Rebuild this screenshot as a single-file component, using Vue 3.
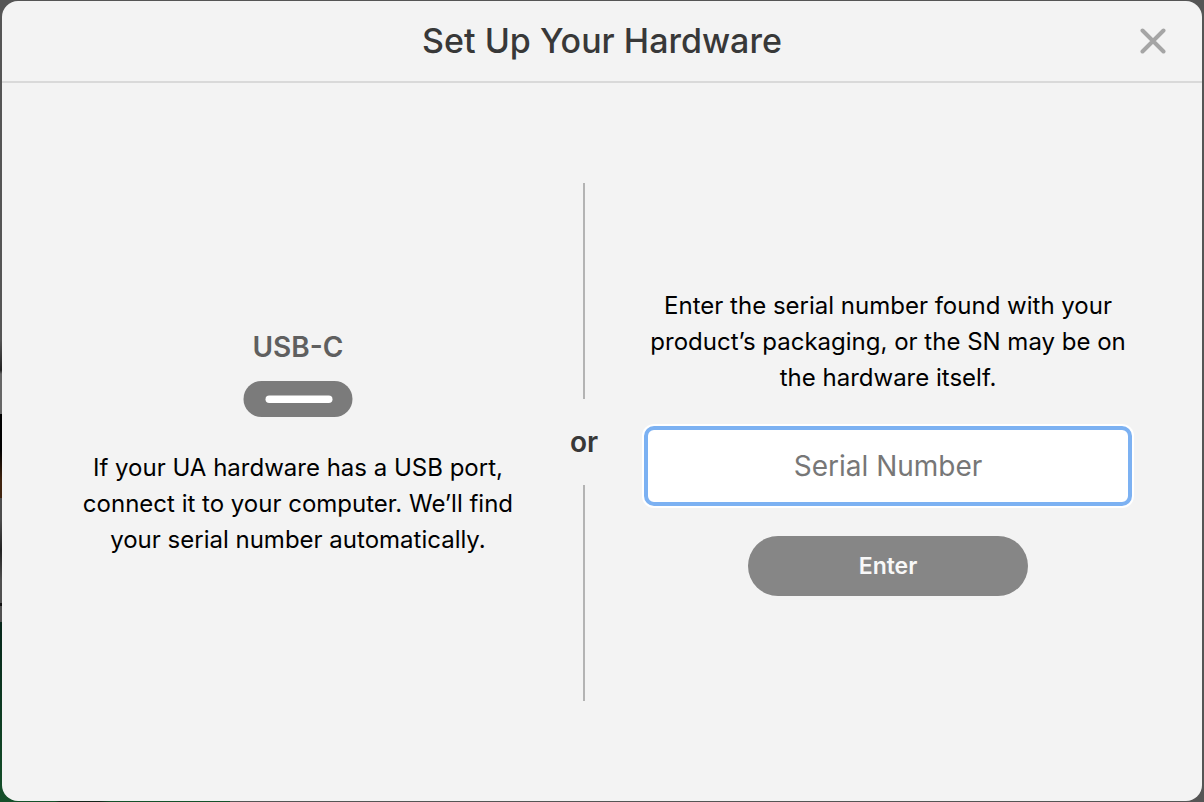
<script setup>
import { ref } from 'vue'

const serial = ref('')
</script>

<template>
  <div class="backdrop">
    <section class="dialog" role="dialog" aria-labelledby="dialog-title">
      <header class="header">
        <h1 id="dialog-title" class="title">Set Up Your Hardware</h1>
        <button class="close" type="button" aria-label="Close">
          <svg viewBox="0 0 26 26" width="26" height="26" aria-hidden="true">
            <path d="M2.5 2.5 23.5 23.5M23.5 2.5 2.5 23.5" fill="none" stroke="#a5a5a5" stroke-width="4" stroke-linecap="round" />
          </svg>
        </button>
      </header>

      <div class="content">
        <div class="usb">
          <h2 class="port-name">USB-C</h2>
          <svg class="port" viewBox="0 0 110 36" width="110" height="36" aria-hidden="true">
            <rect x="0.5" width="109" height="36" rx="18" fill="#7b7b7b" />
            <rect x="22.5" y="14.5" width="67" height="7.5" rx="3.75" fill="#fff" />
          </svg>
          <p class="text">If your UA hardware has a USB port, connect it to your computer. We’ll find your serial number automatically.</p>
        </div>

        <div class="divider">or</div>

        <form class="entry" @submit.prevent>
          <label class="text" for="serial">Enter the serial number found with your product’s packaging, or the SN may be on the hardware itself.</label>
          <input id="serial" v-model="serial" class="serial" type="text" placeholder="Serial Number" />
          <button class="enter" type="submit">Enter</button>
        </form>
      </div>
    </section>
  </div>
</template>

<style>
body {
  margin: 0;
}
</style>

<style scoped>
.backdrop {
  box-sizing: border-box;
  display: flex;
  min-height: 100vh;
  padding: 1px 2px;
  font-family: Inter, "Liberation Sans", sans-serif;
  background:
    linear-gradient(#555 0 340px, #222 370px, #666 374px, #666 414px, #000 414px 450px, #40240f 480px 498px, #4c4c4c 498px 520px, #222 550px, #505050 580px 603px, #111 603px 606px, #505050 606px 622px, #06261a 622px, #15502a 100%) left / 20px 100% no-repeat,
    linear-gradient(90deg, #15502a 55px, #14241a 60px 100px, #15502a 110px) left bottom / 230px 20px no-repeat,
    #555;
}

.dialog {
  flex: 1;
  display: flex;
  flex-direction: column;
  background: #f3f3f3;
  border-radius: 16px;
}

.header {
  display: grid;
  grid-template-columns: 1fr auto 1fr;
  align-items: center;
  height: 80px;
  padding: 0 32px;
  border-bottom: 2px solid #d9d9d9;
}

.title {
  grid-column: 2;
  margin: 0;
  font-size: 34px;
  line-height: 48px;
  font-weight: 500;
  color: #383838;
}

.close {
  justify-self: end;
  display: flex;
  padding: 4px;
  border: 0;
  background: none;
  cursor: pointer;
}

.content {
  flex: 1;
  display: grid;
  grid-template-columns: 432fr auto 488fr;
  align-items: center;
  column-gap: 46px;
  padding: 100px 70px 100px 80px;
}

.usb,
.entry {
  display: flex;
  flex-direction: column;
  align-items: center;
}

.port-name {
  margin: 0 0 13px;
  font-size: 28px;
  line-height: 42px;
  font-weight: 600;
  color: #5f5f5f;
}

.port {
  margin-bottom: 33px;
}

.text {
  margin: 0;
  font-size: 24px;
  line-height: 36px;
  text-align: center;
  color: #000;
}

.divider {
  align-self: stretch;
  display: flex;
  flex-direction: column;
  align-items: center;
  gap: 25px;
  margin-left: 10px;
  font-size: 28px;
  line-height: 36px;
  font-weight: 600;
  color: #383838;
}

.divider::before,
.divider::after {
  content: "";
  flex: 1;
  width: 2px;
  background: #b3b3b3;
}

.serial {
  box-sizing: border-box;
  width: 100%;
  height: 80px;
  margin: 30px 0;
  padding: 0 20px;
  border: 4px solid #7cb1f2;
  border-radius: 10px;
  outline: 0;
  box-shadow: 0 0 0 2px #fff;
  background: #fff;
  font-family: inherit;
  font-size: 28px;
  text-align: center;
  color: #000;
}

.serial::placeholder {
  color: #777;
  opacity: 1;
}

.enter {
  width: 280px;
  height: 60px;
  border: 0;
  border-radius: 30px;
  background: #868686;
  font-family: inherit;
  font-size: 23px;
  font-weight: 600;
  color: #f8f8f8;
  cursor: pointer;
}
</style>
